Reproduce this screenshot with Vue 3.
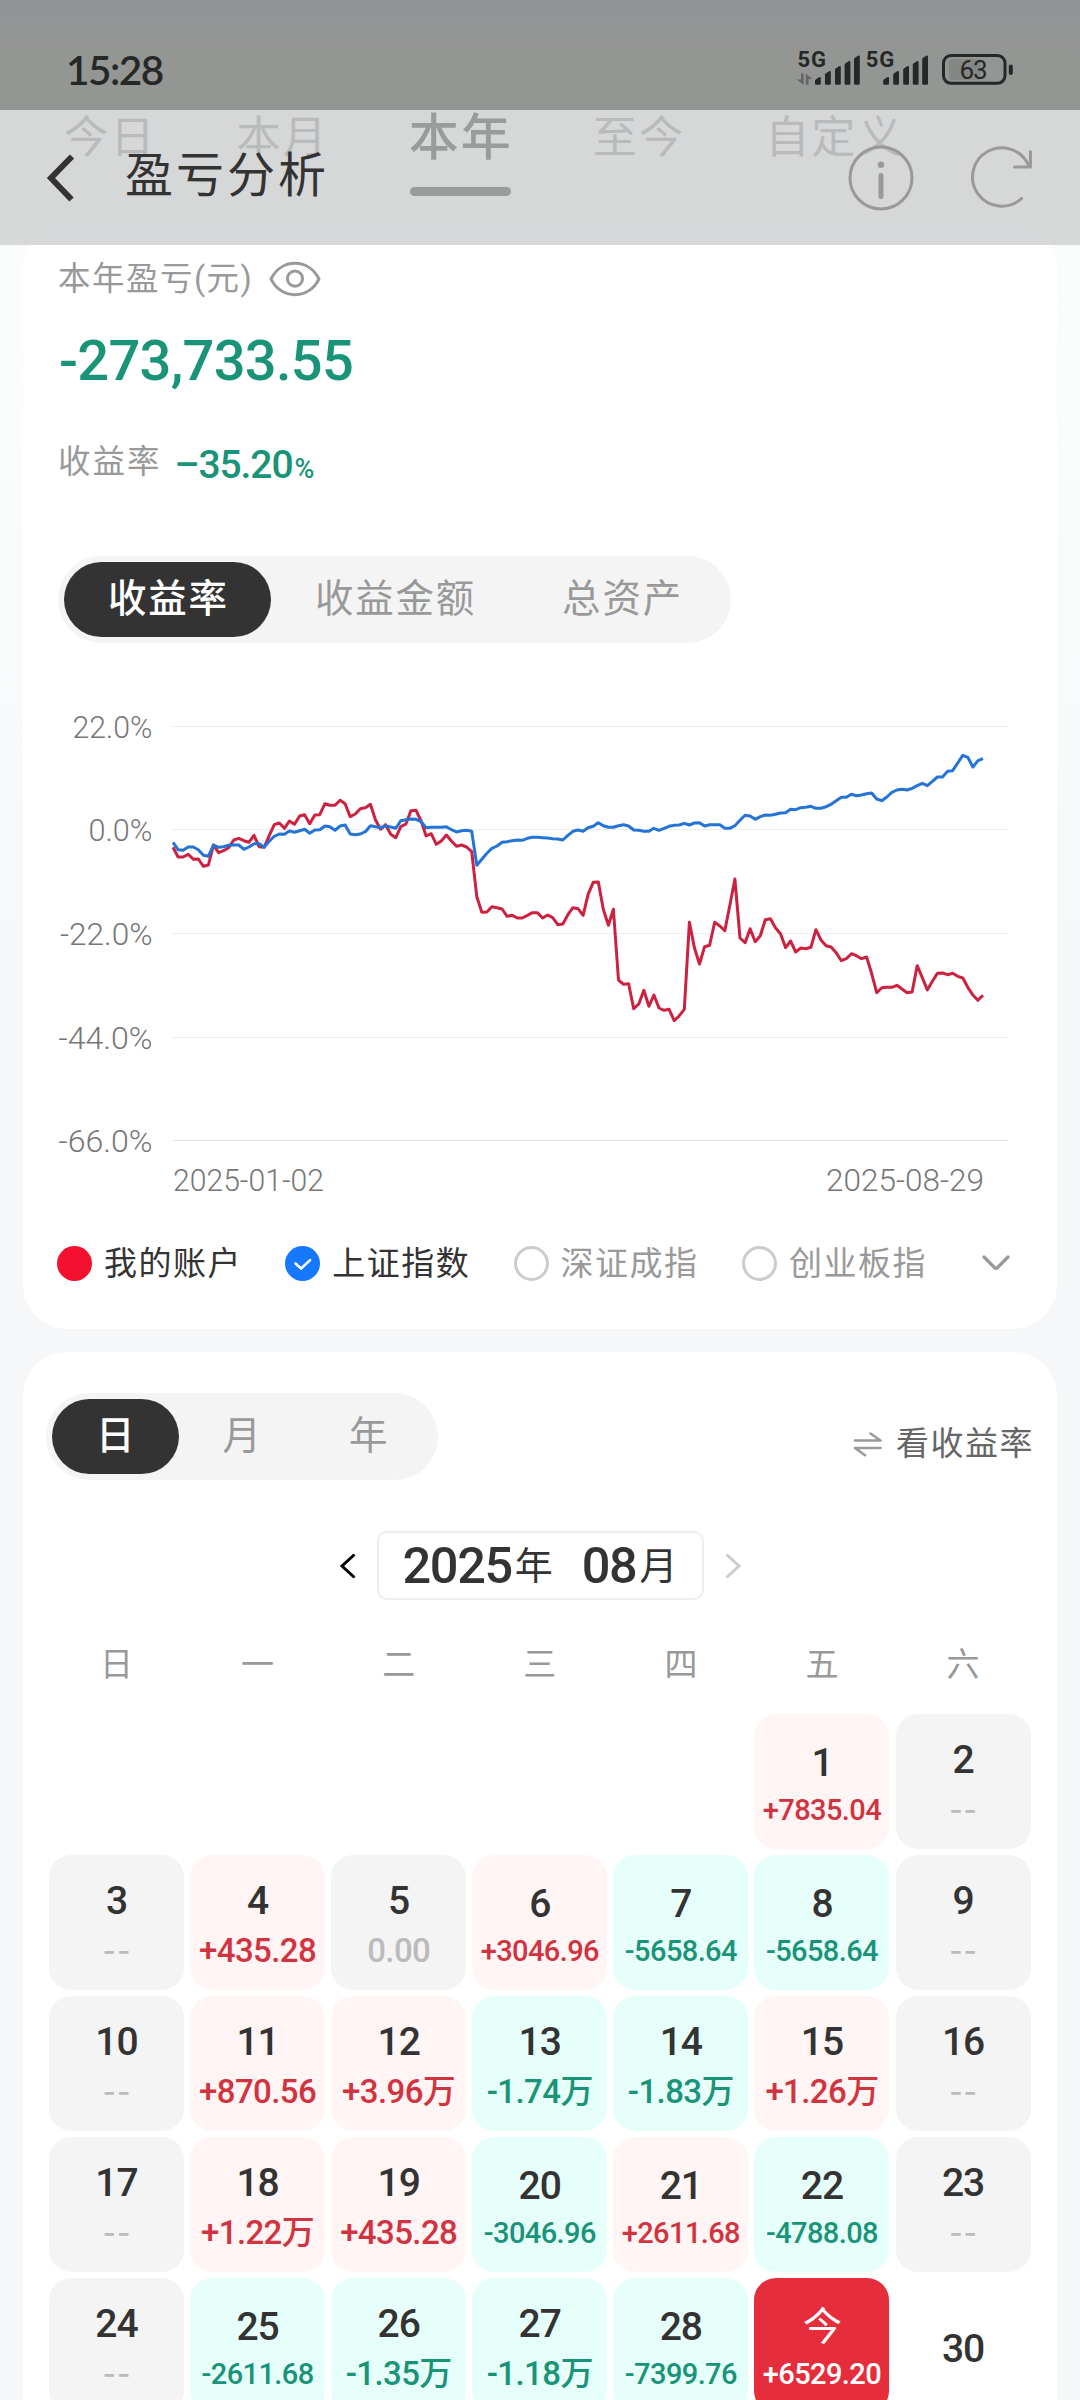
<script setup>
import { ref, computed } from 'vue'

const rangeTabs = ['今日', '本月', '本年', '至今', '自定义']
const activeRange = ref('本年')

const chartTabs = ['收益率', '收益金额', '总资产']
const activeChart = ref('收益率')

const calendarTabs = ['日', '月', '年']
const activeCalendar = ref('日')

const weekDays = ['日', '一', '二', '三', '四', '五', '六']

const signalBars = [
  { x: 0, h: 7.5 },
  { x: 10, h: 13.5 },
  { x: 20, h: 18.5 },
  { x: 29.6, h: 23.5 },
  { x: 39, h: 29 }
]

const axisLabels = [
  { text: '22.0%', y: 46.5, width: 80 },
  { text: '0.0%', y: 149.5, width: 64 },
  { text: '-22.0%', y: 253.5, width: 92.5 },
  { text: '-44.0%', y: 357.5, width: 94 },
  { text: '-66.0%', y: 460.5, width: 94 }
]

// One value per trading day, in thirds of a chart pixel from the top
const accountLine = [
  502, 531, 531, 523, 538, 537, 559, 555, 495, 518, 512, 503, 480, 475, 482, 487, 466, 500, 502, 467,
  434, 429, 445, 423, 433, 408, 404, 431, 405, 404, 371, 376, 376, 361, 371, 410, 402, 386, 383, 373,
  420, 448, 434, 463, 473, 440, 432, 392, 391, 423, 468, 461, 493, 483, 465, 483, 499, 495, 501, 515,
  650, 697, 696, 680, 683, 687, 709, 706, 714, 714, 706, 698, 698, 714, 705, 713, 734, 732, 704, 683,
  686, 706, 643, 607, 606, 688, 736, 688, 900, 913, 911, 986, 972, 931, 979, 945, 984, 991, 988, 1022,
  1007, 988, 727, 803, 852, 800, 796, 727, 738, 752, 675, 597, 774, 788, 746, 785, 767, 719, 716, 743,
  761, 803, 783, 816, 804, 806, 802, 749, 780, 797, 801, 818, 842, 836, 821, 827, 836, 831, 880, 938,
  923, 922, 922, 916, 927, 938, 936, 857, 893, 930, 904, 880, 879, 884, 880, 889, 894, 922, 945, 961,
  946
]

const indexLine = [
  487, 509, 511, 501, 501, 509, 526, 529, 495, 502, 500, 496, 495, 495, 508, 501, 491, 491, 502, 484,
  469, 462, 463, 453, 457, 452, 448, 460, 450, 449, 438, 440, 451, 438, 435, 462, 464, 462, 455, 437,
  440, 443, 438, 441, 445, 422, 419, 417, 418, 425, 443, 442, 442, 442, 440, 449, 456, 452, 451, 454,
  556, 538, 520, 505, 498, 487, 485, 482, 480, 481, 475, 472, 472, 473, 474, 476, 477, 480, 466, 454,
  450, 454, 443, 439, 428, 437, 442, 442, 437, 434, 438, 450, 451, 454, 454, 445, 451, 445, 439, 436,
  435, 430, 435, 429, 428, 438, 434, 434, 434, 445, 445, 437, 421, 406, 408, 418, 410, 405, 406, 403,
  399, 398, 388, 389, 383, 382, 379, 385, 385, 380, 373, 362, 352, 352, 343, 347, 345, 341, 339, 357,
  362, 351, 337, 330, 328, 330, 325, 317, 310, 317, 304, 291, 291, 274, 272, 249, 226, 232, 261, 242,
  236
]

const toPoints = (values) => {
  return values.map((v, i) => `${(150 + i * 5.0625).toFixed(1)},${(v / 3).toFixed(1)}`).join(' ')
}

const accountPoints = computed(() => toPoints(accountLine))
const indexPoints = computed(() => toPoints(indexLine))

const legend = [
  { name: '我的账户', type: 'account' },
  { name: '上证指数', type: 'checked' },
  { name: '深证成指', type: 'empty' },
  { name: '创业板指', type: 'empty' }
]

const profits = {
  1: '+7835.04', 2: '--', 3: '--', 4: '+435.28', 5: '0.00', 6: '+3046.96', 7: '-5658.64',
  8: '-5658.64', 9: '--', 10: '--', 11: '+870.56', 12: '+3.96万', 13: '-1.74万', 14: '-1.83万',
  15: '+1.26万', 16: '--', 17: '--', 18: '+1.22万', 19: '+435.28', 20: '-3046.96', 21: '+2611.68',
  22: '-4788.08', 23: '--', 24: '--', 25: '-2611.68', 26: '-1.35万', 27: '-1.18万', 28: '-7399.76',
  29: '+6529.20'
}
const today = 29

const calendarDays = computed(() => {
  const days = []
  const startDay = new Date(2025, 7, 1).getDay()

  for (let i = 0; i < startDay; i++) {
    days.push(null)
  }

  for (let day = 1; day <= 30; day++) {
    days.push({ day, profit: profits[day] })
  }

  return days
})

const getDayClass = (item) => {
  if (!item) return 'day day-blank'
  const classes = ['day']
  const { day, profit } = item
  if (day === today) classes.push('day-today')
  else if (!profit) classes.push('day-blank')
  else if (profit === '--') classes.push('day-none')
  else if (profit[0] === '+') classes.push('day-up')
  else if (profit[0] === '-') classes.push('day-down')
  else classes.push('day-flat')
  if (profit && profit.length > 7) classes.push('day-long')
  return classes.join(' ')
}
</script>

<template>
  <div class="page">
    <div class="top-bars">
      <div class="status-bar">
        <span class="clock">15:28</span>
        <svg class="status-icons" width="220" height="50" viewBox="795 40 220 50">
          <g class="ink">
            <text x="797.5" y="67.3" class="net" textLength="28.5">5G</text>
            <text x="865.8" y="67.3" class="net" textLength="28.5">5G</text>
            <g v-for="offset in [815, 883.2]" :key="offset">
              <path
                v-for="bar in signalBars"
                :key="bar.x"
                :d="`M${offset + bar.x} ${84.7 - bar.h + 3.5} q0 -1 1 -1.5 l3 -2 q1.8 -.8 1.8 1 V83.5 q0 1.2 -1.2 1.2 h-3.4 q-1.2 0 -1.2 -1.2z`"
              />
            </g>
            <rect x="1008.8" y="64.5" width="4" height="10.5" rx="2" />
          </g>
          <path d="M801 73.5h2.6v11.2l-7-5.2h4.4z M805.8 84.7v-11.2l6.6 5.4h-3.8v5.8z" fill="#656766" />
          <rect x="949" y="59" width="32" height="21" rx="3" fill="#858785" />
          <rect x="943.5" y="55.5" width="61.5" height="27.8" rx="7.5" fill="none" stroke="#262827" stroke-width="3" />
          <text x="959.5" y="78.6" class="battery" textLength="28">63</text>
        </svg>
      </div>
      <header class="nav-bar">
        <svg class="back" width="32" height="48" viewBox="0 0 32 48">
          <path d="M28 2.5 7 24 27.5 45.5" fill="none" stroke="#333" stroke-width="6" />
        </svg>
        <h1 class="title">盈亏分析</h1>
        <svg class="info" width="68" height="68" viewBox="0 0 68 68" fill="none" stroke="#999">
          <circle cx="34" cy="34" r="31" stroke-width="3" />
          <path d="M34 31.5v21" stroke-width="5" stroke-linecap="round" />
          <circle cx="34" cy="20.8" r="3.2" fill="#999" stroke="none" />
        </svg>
        <svg class="refresh" width="68" height="68" viewBox="0 0 68 68" fill="none" stroke="#999" stroke-width="3" stroke-linecap="round" stroke-linejoin="round">
          <path d="M61 22.5A29.2 29.2 0 1 0 53.6 54.4" />
          <path d="M62.4 7.5v15.5h-15.8" />
        </svg>
      </header>
    </div>

    <nav class="range-tabs">
      <span
        v-for="tab in rangeTabs"
        :key="tab"
        :class="['range-tab', { active: tab === activeRange }]"
        @click="activeRange = tab"
      >{{ tab }}</span>
    </nav>

    <section class="card summary">
      <div class="summary-label">
        <span>本年盈亏(元)</span>
        <svg width="54" height="40" viewBox="0 0 54 40" fill="none" stroke="#999" stroke-width="3">
          <path d="M3 20C8 10 17 4.3 27 4.3S46 10 51 20C46 30 37 35.7 27 35.7S8 30 3 20z" stroke-linejoin="round" />
          <circle cx="27" cy="19.6" r="7.6" />
        </svg>
      </div>
      <div class="amount">-273,733.55</div>
      <div class="rate">
        <span class="rate-label">收益率</span>
        <span class="rate-value">–35.20<small>%</small></span>
      </div>

      <div class="segment">
        <button
          v-for="tab in chartTabs"
          :key="tab"
          :class="['segment-btn', { active: tab === activeChart }]"
          @click="activeChart = tab"
        >{{ tab }}</button>
      </div>

      <svg class="chart" width="1034" height="530" viewBox="0 0 1034 530">
        <g class="grid-lines">
          <path d="M150 46.5H985M150 149.5H985M150 253.5H985M150 357.5H985" stroke-dasharray="1 1" />
          <path d="M150 460.5H985" class="base" />
        </g>
        <text
          v-for="label in axisLabels"
          :key="label.text"
          class="axis"
          :x="129.5 - label.width"
          :y="label.y + 11.5"
          :textLength="label.width"
          lengthAdjust="spacingAndGlyphs"
        >{{ label.text }}</text>
        <text class="axis" x="150" y="511" textLength="151" lengthAdjust="spacingAndGlyphs">2025-01-02</text>
        <text class="axis" x="803" y="511" textLength="158" lengthAdjust="spacingAndGlyphs">2025-08-29</text>
        <polyline :points="accountPoints" class="line account-line" />
        <polyline :points="indexPoints" class="line index-line" />
      </svg>

      <div class="legend">
        <div v-for="item in legend" :key="item.name" :class="['legend-item', item.type]">
          <i class="dot">
            <svg v-if="item.type === 'checked'" width="35" height="35" viewBox="0 0 35 35">
              <path d="M10.5 17.5l5.6 5 9-8.4" fill="none" stroke="#fff" stroke-width="2.6" stroke-linecap="round" />
            </svg>
          </i>
          <span>{{ item.name }}</span>
        </div>
        <svg class="more" width="30" height="20" viewBox="0 0 30 20">
          <path d="M3 4l10.6 10.6q1.4 1.4 2.8 0L27 4" fill="none" stroke="#999" stroke-width="3.4" stroke-linecap="round" />
        </svg>
      </div>
    </section>

    <section class="card calendar">
      <div class="calendar-head">
        <div class="segment segment-small">
          <button
            v-for="tab in calendarTabs"
            :key="tab"
            :class="['segment-btn', { active: tab === activeCalendar }]"
            @click="activeCalendar = tab"
          >{{ tab }}</button>
        </div>
        <div class="switch">
          <svg width="30" height="26" viewBox="0 0 30 26" fill="none" stroke="#999" stroke-width="2.6" stroke-linecap="round" stroke-linejoin="round">
            <path d="M2 9.5H27.5L17.5 2.5M27.5 17H2L12 24.2" />
          </svg>
          <span>看收益率</span>
        </div>
      </div>

      <div class="month-nav">
        <svg width="18" height="28" viewBox="0 0 18 28" fill="none" stroke="#000" stroke-width="3">
          <path d="M15.5 2.5L3 14l12.5 11.5" />
        </svg>
        <div class="month-box"><b>2025</b><span>年</span><b class="month">08</b><span>月</span></div>
        <svg width="18" height="28" viewBox="0 0 18 28" fill="none" stroke="#ccc" stroke-width="3">
          <path d="M2.5 2.5L15 14 2.5 25.5" />
        </svg>
      </div>

      <div class="weekdays">
        <span v-for="weekDay in weekDays" :key="weekDay">{{ weekDay }}</span>
      </div>

      <div class="days">
        <div v-for="(item, index) in calendarDays" :key="index" :class="getDayClass(item)">
          <template v-if="item">
            <span class="day-number">{{ item.day === today ? '今' : item.day }}</span>
            <span v-if="item.profit" class="day-profit">{{ item.profit }}</span>
          </template>
        </div>
      </div>
    </section>
  </div>
</template>

<style>
body {
  margin: 0;
}
</style>

<style scoped>
.page {
  position: relative;
  width: 1080px;
  height: 2400px;
  overflow: hidden;
  background: linear-gradient(#fafcfc 0, #fafdfc 400px, #f5f7f9 1000px);
  font-family: Roboto, "Noto Sans CJK SC", sans-serif;
  color: #333;
}

.top-bars {
  position: absolute;
  top: 0;
  left: 0;
  width: 100%;
  z-index: 2;
}

.status-bar {
  display: flex;
  justify-content: space-between;
  height: 70px;
  padding: 40px 65px 0 66px;
  background: linear-gradient(#929397 0, #949694 50px, #949694);
}

.clock {
  font-family: Lato, Roboto, sans-serif;
  font-size: 40.5px;
  font-weight: 600;
  line-height: 60px;
  letter-spacing: -1.5px;
  color: #262827;
}

.ink {
  fill: #262827;
}

.net {
  font-size: 22px;
  font-weight: 700;
}

.battery {
  font-size: 26px;
  fill: #262827;
}

.nav-bar {
  display: flex;
  align-items: center;
  height: 135px;
  padding: 0 44px;
  background: rgba(198, 199, 201, 0.7);
}

.title {
  margin: -3px auto 0 49px;
  font-size: 48px;
  font-weight: 400;
  line-height: 60px;
  letter-spacing: 3px;
}

.info {
  margin-right: 53px;
}

.range-tabs {
  display: flex;
  align-items: center;
  gap: 80px;
  height: 222px;
  padding: 110px 0 0 64px;
  box-sizing: border-box;
}

.range-tab {
  display: flex;
  flex-direction: column;
  height: 112px;
  line-height: 57px;
  font-size: 44.2px;
  letter-spacing: 2px;
  color: #999;
}

.range-tab.active {
  font-size: 50px;
  font-weight: 500;
  color: #333;
}

.range-tab.active::after {
  content: '';
  width: 101px;
  height: 9px;
  margin: 20px 0 0 1px;
  border-radius: 5px;
  background: #333;
}

.card {
  width: 1034px;
  margin: 0 auto;
  border-radius: 44px;
  background: #fff;
  overflow: hidden;
}

.summary {
  height: 1107px;
}

.summary-label {
  display: flex;
  align-items: center;
  gap: 16px;
  height: 52px;
  margin: 31px 0 0 35px;
  line-height: 52px;
  font-size: 32.5px;
  letter-spacing: 1.5px;
  color: #999;
}

.summary-label span {
  width: 194px;
  white-space: nowrap;
}

.amount {
  margin: 21px 0 0 36px;
  line-height: 70px;
  font-size: 56px;
  font-weight: 500;
  letter-spacing: -0.7px;
  color: #1a9478;
}

.rate {
  display: flex;
  height: 50px;
  margin: 41px 0 0 35px;
  line-height: 50px;
}

.rate-label {
  font-size: 32.5px;
  letter-spacing: 2px;
  color: #999;
}

.rate-value {
  margin: 3px 0 0 13px;
  font-size: 39px;
  font-weight: 500;
  letter-spacing: -1.1px;
  color: #1a9478;
}

.rate-value small {
  margin-left: 2px;
  font-size: 27px;
}

.segment {
  display: flex;
  width: max-content;
  height: 75px;
  margin: 69px 0 0 35px;
  padding: 6px;
  border-radius: 44px;
  background: #f4f4f4;
}

.segment-btn {
  padding: 0 42px 1px 44px;
  border: none;
  border-radius: 38px;
  background: none;
  font-family: inherit;
  font-size: 38.5px;
  line-height: 74px;
  letter-spacing: 1.8px;
  color: #999;
}

.segment-btn.active {
  background: #333;
  color: #fff;
  font-weight: 500;
}

.segment-small {
  margin: 0;
}

.segment-small .segment-btn {
  width: 126.5px;
  padding: 0 0 1px;
  letter-spacing: 0;
}

.chart {
  display: block;
  margin-top: 37px;
}

.grid-lines {
  stroke: #ddd;
  stroke-width: 1;
}

.grid-lines .base {
  stroke: #e2e2e2;
}

.axis {
  font-size: 31px;
  font-weight: 300;
  fill: #777;
}

.line {
  fill: none;
  stroke-width: 3;
  stroke-linejoin: round;
}

.account-line {
  stroke: #cc213f;
}

.index-line {
  stroke: #2474d6;
}

.legend {
  display: flex;
  align-items: center;
  height: 50px;
  margin: 28px 0 0 34px;
}

.legend-item {
  display: flex;
  align-items: center;
  gap: 12px;
  width: 228.3px;
  line-height: 52px;
  font-size: 33px;
  letter-spacing: 1.5px;
  white-space: nowrap;
  color: #333;
}

.legend-item.empty {
  color: #999;
}

.legend-item span {
  padding-top: 2px;
}

.dot {
  display: block;
  width: 35px;
  height: 35px;
  border-radius: 50%;
  box-sizing: border-box;
  flex-shrink: 0;
}

.dot svg {
  display: block;
}

.account .dot {
  background: #f41130;
}

.checked .dot {
  background: #1677ff;
}

.empty .dot {
  border: 3px solid #ccc;
}

.more {
  margin-left: 11px;
}

.calendar {
  height: 1200px;
  margin-top: 23px;
}

.calendar-head {
  display: flex;
  justify-content: space-between;
  margin: 41px 23px 0 23px;
}

.switch {
  display: flex;
  align-items: center;
  gap: 13px;
  margin-top: 15px;
  line-height: 50px;
  font-size: 33px;
  letter-spacing: 1.5px;
  color: #666;
}

.month-nav {
  display: flex;
  align-items: center;
  justify-content: center;
  gap: 20px;
  margin-top: 51px;
}

.month-box {
  display: flex;
  align-items: center;
  justify-content: center;
  width: 323px;
  height: 65px;
  border: 2px solid #eee;
  border-radius: 10px;
  font-size: 38px;
  line-height: 68px;
}

.month-box b {
  font-size: 50.5px;
  font-weight: 500;
  letter-spacing: -1.4px;
  margin-right: 3px;
}

.month-box .month {
  margin-left: 29px;
}

.weekdays {
  display: grid;
  grid-template-columns: repeat(7, 135px);
  gap: 6.1px;
  margin: 40px 0 0 26px;
  line-height: 50px;
  font-size: 33px;
  text-align: center;
  color: #999;
}

.days {
  display: grid;
  grid-template-columns: repeat(7, 135px);
  grid-auto-rows: 135px;
  gap: 6.1px;
  margin: 24px 0 0 26px;
}

.day {
  display: flex;
  flex-direction: column;
  align-items: center;
  justify-content: center;
  padding-top: 7px;
  box-sizing: border-box;
  border-radius: 22px;
  white-space: nowrap;
}

.day-number {
  line-height: 50px;
  font-size: 39px;
  font-weight: 500;
  letter-spacing: -1px;
}

.day-profit {
  line-height: 50px;
  font-size: 33px;
  font-weight: 500;
  letter-spacing: -0.6px;
}

.day-long .day-profit {
  line-height: 44px;
  font-size: 29px;
}

.day-up {
  background: #fff5f4;
}

.day-up .day-profit {
  color: #d13341;
}

.day-down {
  background: #e7fffa;
}

.day-down .day-profit {
  color: #1a9478;
}

.day-none,
.day-flat {
  background: #f4f4f4;
}

.day-none .day-profit,
.day-flat .day-profit {
  color: #bbb;
}

.day-none .day-profit {
  font-family: Inter, Roboto, sans-serif;
  font-size: 29px;
  letter-spacing: 1px;
  margin-right: -1px;
}

.day-today {
  background: #e52d3b;
  color: #fff;
}

.day-today .day-number {
  font-weight: 400;
}
</style>
